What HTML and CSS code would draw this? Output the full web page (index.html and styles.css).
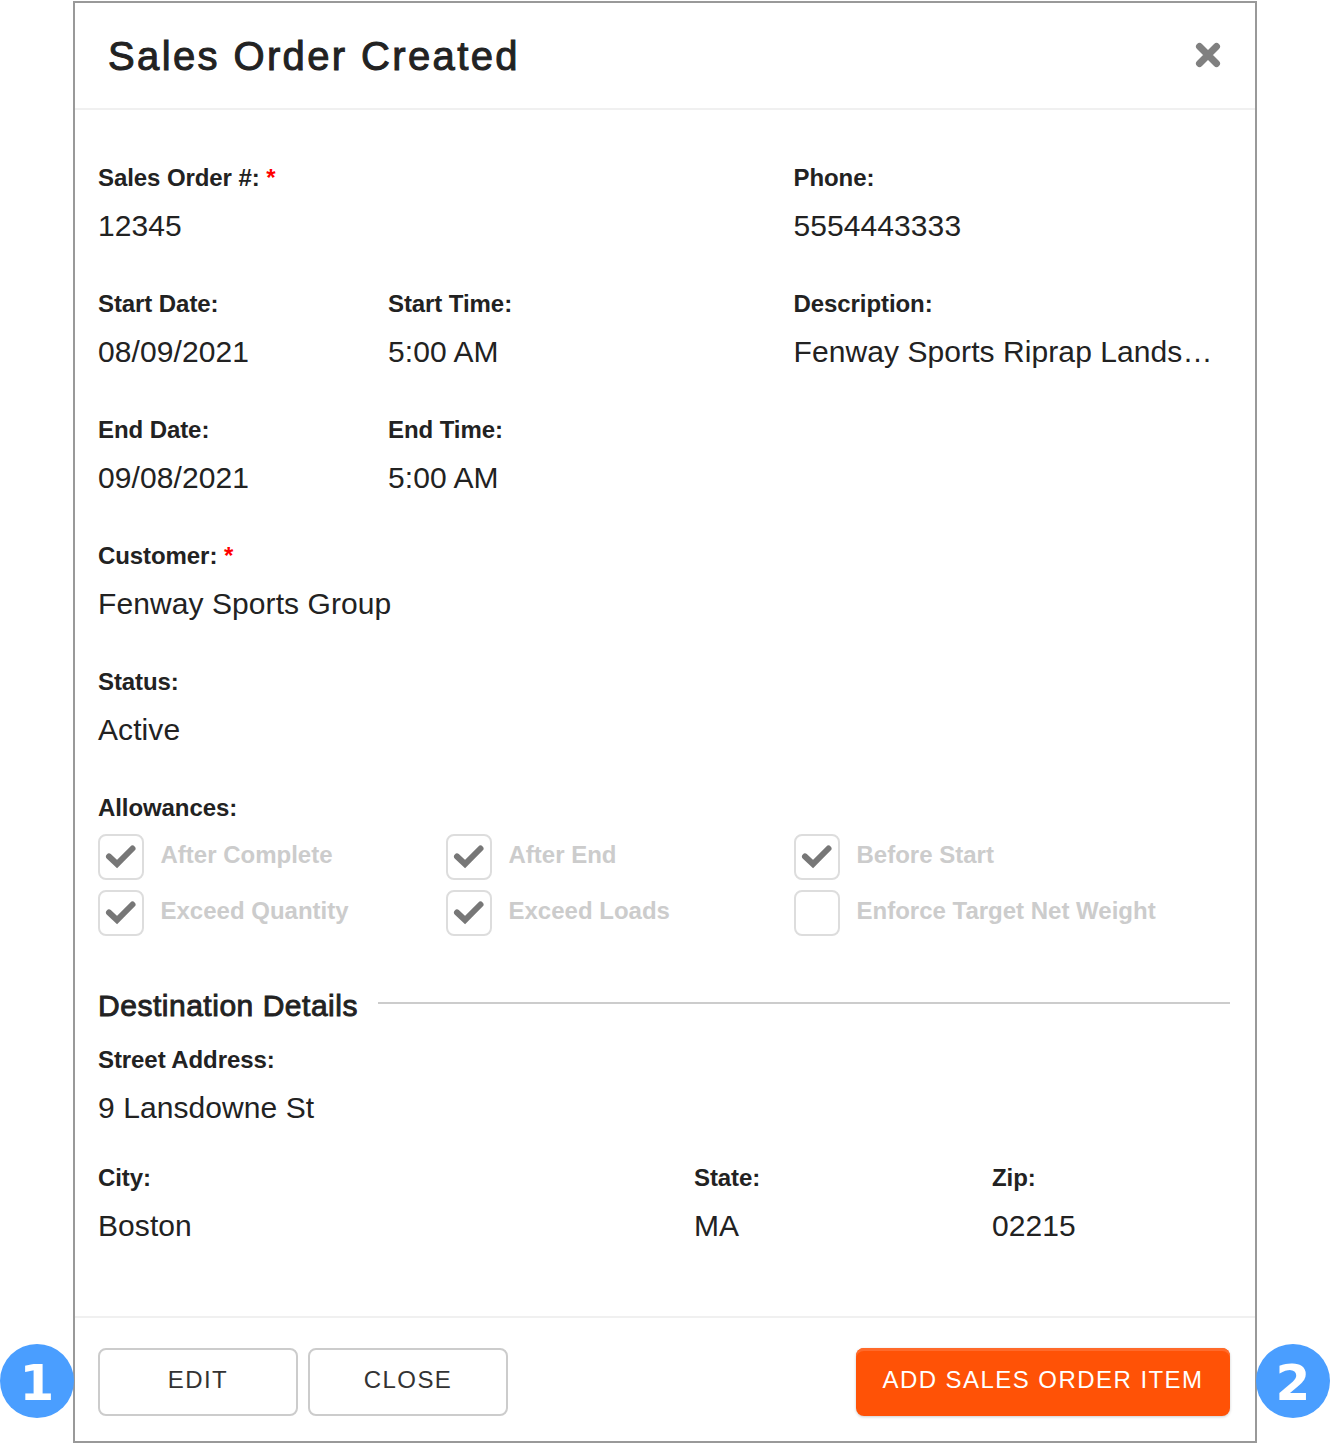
FILE: index.html
```html
<!DOCTYPE html>
<html lang="en">
<head>
<meta charset="utf-8">
<title>Sales Order Created</title>
<link rel="stylesheet" href="styles.css">
</head>
<body>
<div class="stage">
  <section class="modal">
    <header class="modal-head">
      <h1 class="modal-title">Sales Order Created</h1>
      <svg class="close-icon" viewBox="0 0 26 26" aria-label="Close"><path d="M4.5 4.5L21.5 21.5M21.5 4.5L4.5 21.5"/></svg>
    </header>
    <main class="modal-body">
      <div class="grid-top">
        <div class="field span-2"><div class="label">Sales Order #: <span class="req">*</span></div><div class="value">12345</div></div>
        <div class="field"><div class="label">Phone:</div><div class="value">5554443333</div></div>
        <div class="field"><div class="label">Start Date:</div><div class="value">08/09/2021</div></div>
        <div class="field"><div class="label">Start Time:</div><div class="value">5:00 AM</div></div>
        <div class="field"><div class="label">Description:</div><div class="value">Fenway Sports Riprap Lands…</div></div>
        <div class="field"><div class="label">End Date:</div><div class="value">09/08/2021</div></div>
        <div class="field span-rest"><div class="label">End Time:</div><div class="value">5:00 AM</div></div>
        <div class="field span-all"><div class="label">Customer: <span class="req">*</span></div><div class="value">Fenway Sports Group</div></div>
        <div class="field span-all"><div class="label">Status:</div><div class="value">Active</div></div>
      </div>
      <div class="allowances">
        <div class="label">Allowances:</div>
        <div class="check-grid">
          <div class="check"><span class="box"><svg class="tick" viewBox="0 0 46 46"><path d="M11 22.500L19 30L34.500 14.500"/></svg></span><span class="check-text">After Complete</span></div>
          <div class="check"><span class="box"><svg class="tick" viewBox="0 0 46 46"><path d="M11 22.500L19 30L34.500 14.500"/></svg></span><span class="check-text">After End</span></div>
          <div class="check"><span class="box"><svg class="tick" viewBox="0 0 46 46"><path d="M11 22.500L19 30L34.500 14.500"/></svg></span><span class="check-text">Before Start</span></div>
          <div class="check"><span class="box"><svg class="tick" viewBox="0 0 46 46"><path d="M11 22.500L19 30L34.500 14.500"/></svg></span><span class="check-text">Exceed Quantity</span></div>
          <div class="check"><span class="box"><svg class="tick" viewBox="0 0 46 46"><path d="M11 22.500L19 30L34.500 14.500"/></svg></span><span class="check-text">Exceed Loads</span></div>
          <div class="check"><span class="box"></span><span class="check-text">Enforce Target Net Weight</span></div>
        </div>
      </div>
      <div class="section-head">
        <h2 class="section-title">Destination Details</h2>
        <span class="section-rule"></span>
      </div>
      <div class="field street"><div class="label">Street Address:</div><div class="value">9 Lansdowne St</div></div>
      <div class="grid-addr">
        <div class="field"><div class="label">City:</div><div class="value">Boston</div></div>
        <div class="field"><div class="label">State:</div><div class="value">MA</div></div>
        <div class="field"><div class="label">Zip:</div><div class="value">02215</div></div>
      </div>
    </main>
    <footer class="modal-foot">
      <div class="foot-left">
        <button class="btn btn-ghost">EDIT</button>
        <button class="btn btn-ghost">CLOSE</button>
      </div>
      <button class="btn btn-primary">ADD SALES ORDER ITEM</button>
    </footer>
  </section>
  <span class="badge badge-left">1</span>
  <span class="badge badge-right">2</span>
</div>
</body>
</html>
```
FILE: styles.css
```css
* { box-sizing: border-box; }
html, body { margin: 0; padding: 0; background: #fff; }
body { font-family: "Liberation Sans", Arial, sans-serif; color: #222; }
.stage { position: relative; width: 1330px; height: 1444px; padding: 1px 73px; }
.modal { width: 1184px; height: 1442px; border: 2px solid #999; background: #fff; display: flex; flex-direction: column; }
.modal-head { height: 107px; flex: none; border-bottom: 2px solid #f0f0f0; display: flex; align-items: center; justify-content: space-between; padding: 0 34px 0 33px; }
.modal-title { margin: 0; font-size: 40px; line-height: 48px; font-weight: 400; -webkit-text-stroke: 1px #222; letter-spacing: 2.37px; color: #222; }
.close-icon { width: 26px; height: 26px; display: block; margin-bottom: 2px; }
.close-icon path { fill: none; stroke: #808080; stroke-width: 7px; stroke-linecap: round; }
.modal-body { flex: 1; padding: 50px 25px 0 23px; }
.grid-top { display: grid; grid-template-columns: 290px 405.5px 1fr; grid-auto-rows: 126px; }
.span-2 { grid-column: span 2; }
.span-rest { grid-column: span 2; }
.span-all { grid-column: 1 / -1; }
.field { min-width: 0; }
.label { font-size: 24px; line-height: 36px; font-weight: 700; color: #222; letter-spacing: -0.08px; }
.req { color: #f00; }
.value { margin-top: 12px; font-size: 30px; line-height: 36px; color: #222; letter-spacing: 0.08px; white-space: nowrap; }
.allowances { margin-top: 0; }
.check-grid { margin-top: 8px; display: grid; grid-template-columns: repeat(3, 348px); grid-auto-rows: 46px; row-gap: 10px; }
.check { display: flex; align-items: flex-start; gap: 16.5px; }
.box { width: 46px; height: 46px; flex: none; border: 2px solid #ddd; border-radius: 8px; position: relative; }
.tick { position: absolute; left: -2px; top: -2px; width: 46px; height: 46px; display: block; }
.tick path { fill: none; stroke: #777; stroke-width: 6px; stroke-linecap: round; stroke-linejoin: miter; }
.check-text { font-size: 24px; line-height: 42px; font-weight: 700; color: #ccc; letter-spacing: 0; white-space: nowrap; }
.section-head { margin-top: 50px; height: 40px; display: flex; align-items: center; gap: 20px; }
.section-title { margin: 0; font-size: 30px; line-height: 40px; font-weight: 400; -webkit-text-stroke: 0.9px #222; color: #222; letter-spacing: 0.52px; white-space: nowrap; }
.section-rule { flex: 1; height: 2px; background: #ccc; margin-bottom: 7px; }
.street { margin-top: 16px; }
.grid-addr { margin-top: 34px; display: grid; grid-template-columns: 596px 298px 1fr; }
.modal-foot { height: 125px; flex: none; border-top: 2px solid #f0f0f0; padding: 30px 25px 0 23px; display: flex; align-items: flex-start; justify-content: space-between; }
.foot-left { display: flex; gap: 10px; }
.btn { height: 68px; font-family: inherit; font-size: 24px; letter-spacing: 1.45px; border-radius: 8px; padding: 0 0 4px; background: #fff; }
.btn-ghost { width: 200px; border: 2px solid #ccc; color: #333; }
.btn-primary { width: 374px; border: 0; background: #ff5206; color: #fff; box-shadow: inset 0 3px 0 #ff6a2a, 0 1px 3px rgba(0,0,0,.2); }
.badge { position: absolute; top: 1344px; width: 74px; height: 74px; border-radius: 50%; background: #4a9eff; color: #fff; font-family: "DejaVu Sans", sans-serif; font-weight: 700; font-size: 50px; line-height: 78px; text-align: center; }
.badge-left { left: 0; }
.badge-right { left: 1256px; }
```
